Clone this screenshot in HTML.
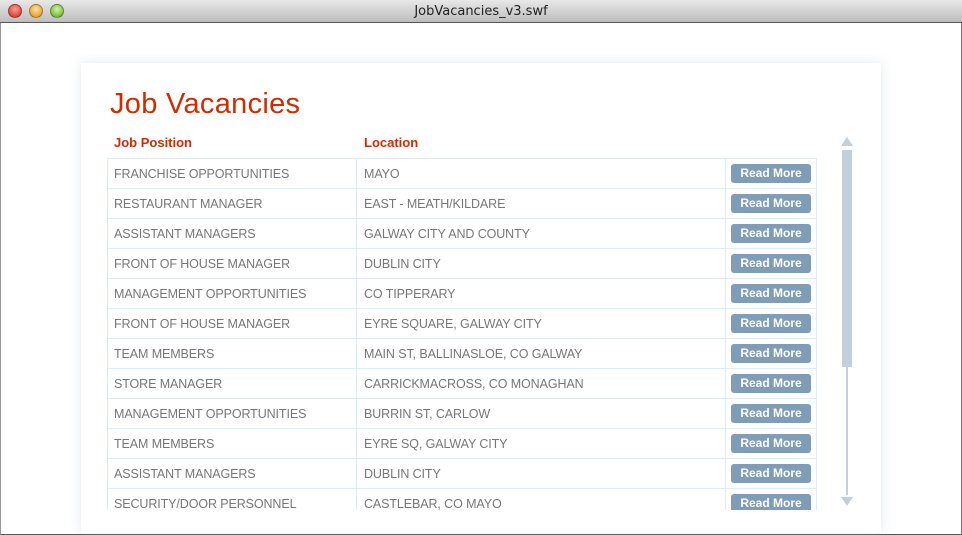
<!DOCTYPE html>
<html><head><style>
*{margin:0;padding:0;box-sizing:border-box}
body{width:962px;height:535px;overflow:hidden;background:#fff;font-family:"Liberation Sans",sans-serif;position:relative}
.tb{position:absolute;left:0;top:0;width:962px;height:23px;background:linear-gradient(#e8e8e8,#bdbdbd);border-bottom:1px solid #555}
.tb .t{position:absolute;left:0;right:0;top:4px;text-align:center;font-size:13px;color:#222;font-family:"DejaVu Sans","Liberation Sans",sans-serif}
.dot{position:absolute;top:4px;width:14px;height:14px;border-radius:50%;border:1px solid rgba(0,0,0,.3)}
.win{position:absolute;left:0;top:23px;width:962px;height:512px;border-left:1px solid #999;border-right:1px solid #777;border-bottom:1px solid #555}
.card{position:absolute;left:81px;top:63px;width:800px;height:470px;background:#fff;box-shadow:0 0 12px rgba(180,190,205,.35)}
h1{position:absolute;left:110px;top:88px;font-family:"Liberation Sans",sans-serif;font-weight:normal;font-size:29px;color:#d42a00;letter-spacing:0.3px}
.hd{position:absolute;top:135px;font-size:13px;font-weight:bold;color:#d42a00}
.tbl{position:absolute;left:107px;top:158px;width:710px;height:352px;overflow:hidden}
table{border-collapse:collapse;width:710px}
td{height:30px;border:1px solid #dcecf8;font-size:12.5px;letter-spacing:-0.1px;color:#777;padding-left:6px}
td.l{padding-left:7px}
td.b{padding-left:5px}
.btn{display:block;width:80px;height:19px;border-radius:3px;background:#7f9db7;color:#fff;font-weight:bold;font-size:12px;text-align:center;line-height:19px;letter-spacing:0}
.sb{position:absolute;left:842px;top:150px;width:10px;height:217px;background:#c2d0dc}
.ln{position:absolute;left:846px;top:367px;width:2px;height:128px;background:#c2d0dc}
</style></head><body>
<div class="tb"><div class="dot" style="left:8px;background:radial-gradient(circle at 50% 35%,#ff9c90,#d0261b)"></div><div class="dot" style="left:29px;background:radial-gradient(circle at 50% 35%,#ffe19a,#e08a10)"></div><div class="dot" style="left:50px;background:radial-gradient(circle at 50% 35%,#cdf59a,#58a820)"></div><div class="t">JobVacancies_v3.swf</div></div>
<div class="win"></div>
<div class="card"></div>
<h1>Job Vacancies</h1>
<div class="hd" style="left:114px">Job Position</div>
<div class="hd" style="left:364px">Location</div>
<div class="tbl"><table>
<tr><td style="width:249px">FRANCHISE OPPORTUNITIES</td><td class="l" style="width:369px">MAYO</td><td class="b"><span class="btn">Read More</span></td></tr>
<tr><td>RESTAURANT MANAGER</td><td class="l">EAST - MEATH/KILDARE</td><td class="b"><span class="btn">Read More</span></td></tr>
<tr><td>ASSISTANT MANAGERS</td><td class="l">GALWAY CITY AND COUNTY</td><td class="b"><span class="btn">Read More</span></td></tr>
<tr><td>FRONT OF HOUSE MANAGER</td><td class="l">DUBLIN CITY</td><td class="b"><span class="btn">Read More</span></td></tr>
<tr><td>MANAGEMENT OPPORTUNITIES</td><td class="l">CO TIPPERARY</td><td class="b"><span class="btn">Read More</span></td></tr>
<tr><td>FRONT OF HOUSE MANAGER</td><td class="l">EYRE SQUARE, GALWAY CITY</td><td class="b"><span class="btn">Read More</span></td></tr>
<tr><td>TEAM MEMBERS</td><td class="l">MAIN ST, BALLINASLOE, CO GALWAY</td><td class="b"><span class="btn">Read More</span></td></tr>
<tr><td>STORE MANAGER</td><td class="l">CARRICKMACROSS, CO MONAGHAN</td><td class="b"><span class="btn">Read More</span></td></tr>
<tr><td>MANAGEMENT OPPORTUNITIES</td><td class="l">BURRIN ST, CARLOW</td><td class="b"><span class="btn">Read More</span></td></tr>
<tr><td>TEAM MEMBERS</td><td class="l">EYRE SQ, GALWAY CITY</td><td class="b"><span class="btn">Read More</span></td></tr>
<tr><td>ASSISTANT MANAGERS</td><td class="l">DUBLIN CITY</td><td class="b"><span class="btn">Read More</span></td></tr>
<tr><td>SECURITY/DOOR PERSONNEL</td><td class="l">CASTLEBAR, CO MAYO</td><td class="b"><span class="btn">Read More</span></td></tr>
</table></div>
<svg style="position:absolute;left:840px;top:136px" width="14" height="12"><polygon points="7,1 13,10 1,10" fill="#c2d0dc"/></svg>
<div class="sb"></div><div class="ln"></div>
<svg style="position:absolute;left:840px;top:496px" width="14" height="12"><polygon points="1,1 13,1 7,10" fill="#c2d0dc"/></svg>
</body></html>
